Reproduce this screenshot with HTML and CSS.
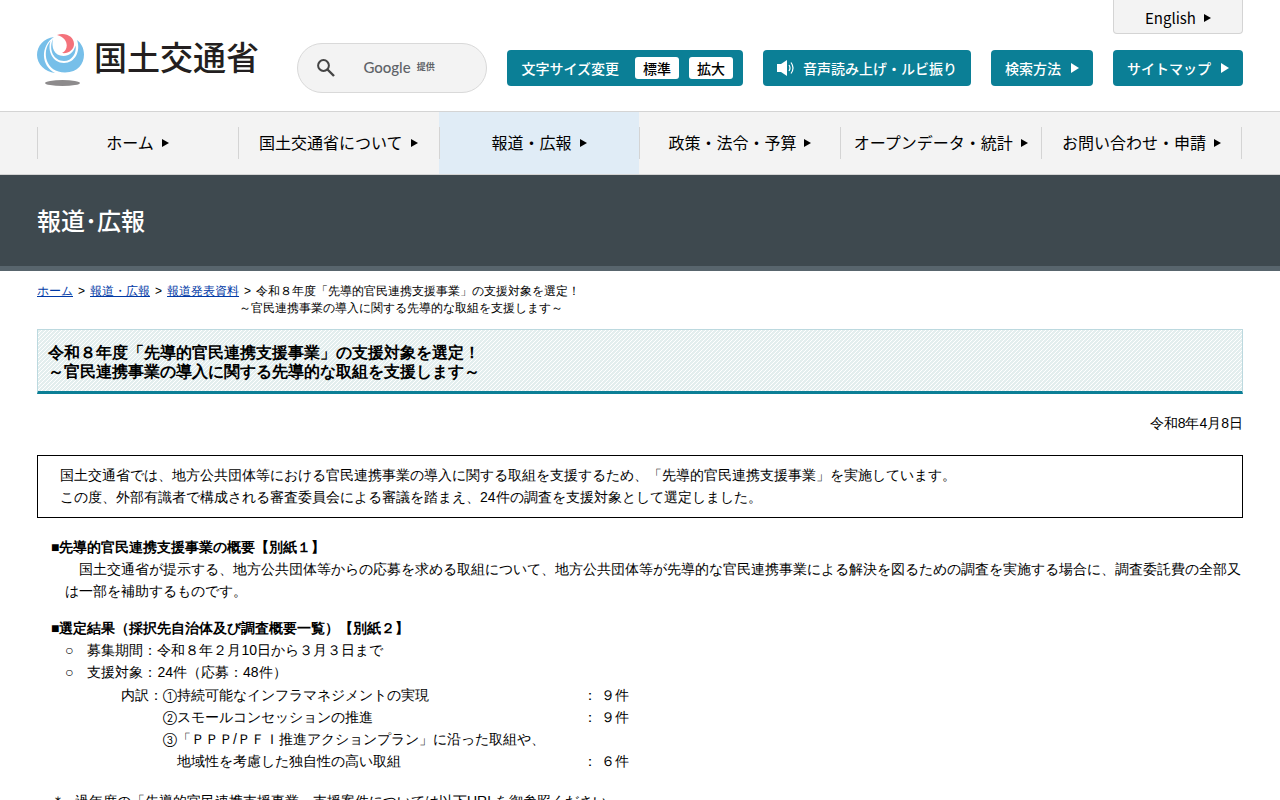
FILE: index.html
```html
<!DOCTYPE html>
<html lang="ja">
<head>
    <meta charset="UTF-8">
    <meta name="viewport" content="width=device-width, initial-scale=1.0">
    <title>報道発表資料：令和８年度「先導的官民連携支援事業」の支援対象を選定！ - 国土交通省</title>
    <link rel="stylesheet" href="styles.css">
</head>
<body>
    <header class="header">
        <a href="#" class="logo">
            <svg class="logo-mark" viewBox="0 0 48 53" width="48" height="53" aria-hidden="true">
                <ellipse cx="25.500" cy="49" rx="17.500" ry="3" fill="#8d8b8c"/>
                <path d="M17 3C7 4 0 12 0 21c0 9 8 17 18 18C4 32 3 12 17 3z" fill="#77bfe9"/>
                <path d="M13.500 7C4 18 9 38.500 28 38.500c13 0 19-8.500 19-18C47 14 44 9 40 6c4 11-2 23-13 23C16 29 10 17 13.500 7z" fill="#77bfe9"/>
                <path d="M16 5c-5 11 1 22 11 22 8 0 13-8 11.500-15.500C37 18 32 22 26.500 22 17 22 14 13 16 5z" fill="#77bfe9"/>
                <path d="M20 1c9-3 17 2 17 9 0 6-6 10-12 9 7-3 7-15-5-18z" fill="#f4727b"/>
            </svg>
            <span class="logo-text">国土交通省</span>
        </a>
        <div class="header-right">
            <a href="#" class="english">English<span class="arrow"></span></a>
            <div class="tools">
                <form class="search">
                    <button type="submit" class="search-button" aria-label="検索">
                        <svg viewBox="0 0 18 18" width="18" height="18" aria-hidden="true">
                            <circle cx="6.500" cy="6.500" r="5.400" fill="none" stroke="#444" stroke-width="2"/>
                            <path d="M10.500 10.500l6.500 6.500" stroke="#444" stroke-width="2.400"/>
                        </svg>
                    </button>
                    <label class="search-label" for="q"><span class="google">Google</span>提供</label>
                    <input type="text" id="q" class="search-input">
                </form>
                <div class="tool font-size">
                    <span>文字サイズ変更</span>
                    <button type="button">標準</button>
                    <button type="button">拡大</button>
                </div>
                <a href="#" class="tool">
                    <svg class="speaker" viewBox="0 0 18 16" width="18" height="16" aria-hidden="true">
                        <path d="M0 4h4l6-4v16l-6-4H0z" fill="#fff"/>
                        <path d="M12 5q2 3 0 6M14 2.500q4 5.500 0 11" fill="none" stroke="#fff" stroke-width="1.200"/>
                    </svg>
                    音声読み上げ・ルビ振り
                </a>
                <a href="#" class="tool">検索方法<span class="arrow"></span></a>
                <a href="#" class="tool">サイトマップ<span class="arrow"></span></a>
            </div>
        </div>
    </header>

    <nav class="nav">
        <ul>
            <li><a href="#">ホーム<span class="arrow"></span></a></li>
            <li><a href="#">国土交通省について<span class="arrow"></span></a></li>
            <li class="active"><a href="#">報道・広報<span class="arrow"></span></a></li>
            <li><a href="#">政策・法令・予算<span class="arrow"></span></a></li>
            <li><a href="#">オープンデータ・統計<span class="arrow"></span></a></li>
            <li><a href="#">お問い合わせ・申請<span class="arrow"></span></a></li>
        </ul>
    </nav>

    <div class="category">報道･広報</div>

    <main class="main">
        <ol class="breadcrumb">
            <li><a href="#">ホーム</a></li>
            <li><a href="#">報道・広報</a></li>
            <li><a href="#">報道発表資料</a></li>
            <li>令和８年度「先導的官民連携支援事業」の支援対象を選定！<br>～官民連携事業の導入に関する先導的な取組を支援します～</li>
        </ol>

        <h1>令和８年度「先導的官民連携支援事業」の支援対象を選定！<br>～官民連携事業の導入に関する先導的な取組を支援します～</h1>
        <p class="date">令和8年4月8日</p>

        <div class="summary">
            国土交通省では、地方公共団体等における官民連携事業の導入に関する取組を支援するため、「先導的官民連携支援事業」を実施しています。<br>
            この度、外部有識者で構成される審査委員会による審議を踏まえ、24件の調査を支援対象として選定しました。
        </div>

        <section class="section">
            <h2>■先導的官民連携支援事業の概要【別紙１】</h2>
            <p class="indent">国土交通省が提示する、地方公共団体等からの応募を求める取組について、地方公共団体等が先導的な官民連携事業による解決を図るための調査を実施する場合に、調査委託費の全部又は一部を補助するものです。</p>
        </section>

        <section class="section">
            <h2>■選定結果（採択先自治体及び調査概要一覧）【別紙２】</h2>
            <ul class="result">
                <li>○　募集期間：令和８年２月10日から３月３日まで</li>
                <li>○　支援対象：24件（応募：48件）</li>
            </ul>
            <table class="breakdown">
                <tr>
                    <th>内訳：</th>
                    <td><span class="num">①</span>持続可能なインフラマネジメントの実現</td>
                    <td class="count">： ９件</td>
                </tr>
                <tr>
                    <th></th>
                    <td><span class="num">②</span>スモールコンセッションの推進</td>
                    <td class="count">： ９件</td>
                </tr>
                <tr>
                    <th></th>
                    <td><span class="num">③</span>「ＰＰＰ/ＰＦＩ推進アクションプラン」に沿った取組や、</td>
                    <td></td>
                </tr>
                <tr>
                    <th></th>
                    <td>　地域性を考慮した独自性の高い取組</td>
                    <td class="count">： ６件</td>
                </tr>
            </table>
        </section>

        <p class="note"><span class="mark">＊</span>過年度の「先導的官民連携支援事業」支援案件については以下URLを御参照ください。</p>
    </main>
</body>
</html>
```
FILE: styles.css
```css
* {
    box-sizing: border-box;
}
body {
    margin: 0;
    background: #fff;
    color: #000;
    font-family: "Liberation Sans", sans-serif;
    font-size: 14px;
    line-height: 22px;
}
ul, ol {
    list-style: none;
    margin: 0;
    padding: 0;
}
p {
    margin: 0;
}
.header, .nav, .category {
    font-family: "Noto Sans CJK JP", sans-serif;
    padding: 0 37px;
}
.header a, .nav a {
    color: #000;
    text-decoration: none;
}
.arrow {
    display: inline-block;
    border-left: 7px solid currentColor;
    border-top: 4px solid transparent;
    border-bottom: 4px solid transparent;
    margin-left: 8px;
}

/* header */
.header {
    display: flex;
    justify-content: space-between;
    align-items: flex-start;
    padding-bottom: 18px;
}
.logo {
    display: flex;
    gap: 9px;
    padding-top: 34px;
}
.logo-text {
    color: #231f20;
    font-size: 33px;
    font-weight: 500;
    line-height: 44px;
    white-space: nowrap;
}
.header-right {
    display: flex;
    flex-direction: column;
    align-items: flex-end;
    gap: 9px;
}
.header .english {
    display: flex;
    align-items: center;
    justify-content: center;
    width: 130px;
    height: 34px;
    padding-top: 3px;
    background: #f3f3f3;
    border: 1px solid #d4d4d4;
    border-top: 0;
    border-radius: 0 0 4px 4px;
    font-size: 15px;
}
.tools {
    display: flex;
    align-items: center;
    gap: 20px;
}
.search {
    display: flex;
    align-items: center;
    width: 190px;
    height: 50px;
    padding: 0 19px;
    background: #f3f3f3;
    border: 1px solid #d9d9d9;
    border-radius: 25px;
}
.search-button {
    display: flex;
    padding: 0;
    background: none;
    border: 0;
    cursor: pointer;
}
.search-label {
    display: flex;
    align-items: center;
    gap: 6px;
    margin-left: 28px;
    padding-bottom: 2px;
    color: #5f6368;
    font-size: 9px;
    font-weight: 700;
    white-space: nowrap;
}
.google {
    font-family: Lato, sans-serif;
    font-size: 15px;
    font-weight: 500;
}
.search-input {
    flex: 1;
    min-width: 0;
    padding: 0;
    background: none;
    border: 0;
    outline: none;
}
.header .tool {
    display: flex;
    align-items: center;
    height: 36px;
    padding: 0 14px;
    background: #0b7f96;
    border-radius: 4px;
    color: #fff;
    font-weight: 500;
    white-space: nowrap;
}
.tool .arrow {
    border-left-width: 8px;
    border-top-width: 5px;
    border-bottom-width: 5px;
    margin-left: 10px;
}
.header .font-size {
    gap: 10px;
    padding-right: 10px;
}
.font-size span {
    margin-right: 6px;
}
.font-size button {
    width: 44px;
    height: 22px;
    padding: 0;
    background: #fff;
    border: 0;
    border-radius: 3px;
    color: #000;
    font-family: inherit;
    font-size: 14px;
    font-weight: 500;
    line-height: 22px;
    cursor: pointer;
}
.speaker {
    margin-right: 8px;
}

/* global nav */
.nav {
    background: #f3f3f3;
    border-top: 1px solid #d4d4d4;
    border-bottom: 1px solid #d4d4d4;
}
.nav ul {
    display: grid;
    grid-template-columns: repeat(6, 1fr);
    padding-right: 1px;
    background: linear-gradient(#d4d4d4, #d4d4d4) right center / 1px 32px no-repeat content-box;
}
.nav li {
    background: linear-gradient(#d4d4d4, #d4d4d4) left center / 1px 32px no-repeat;
}
.nav .active {
    background-color: #e0ecf6;
}
.nav a {
    display: flex;
    align-items: center;
    justify-content: center;
    height: 62px;
    padding-bottom: 2px;
    font-size: 16px;
    white-space: nowrap;
}
.nav .arrow {
    margin-top: 2px;
}
.category {
    padding-top: 25px;
    padding-bottom: 26px;
    background: #3e494f;
    border-bottom: 5px solid #58656d;
    color: #fff;
    font-size: 24px;
    font-weight: 500;
    line-height: 40px;
}

/* contents */
.main {
    padding: 12px 37px 40px;
}
.breadcrumb {
    display: flex;
    font-size: 12px;
    line-height: 17px;
}
.breadcrumb li + li::before {
    content: ">";
    padding: 0 5px;
}
.breadcrumb a {
    color: #0039a6;
}
h1 {
    margin: 12px 0 0;
    padding: 13px 10px 10px;
    background: linear-gradient(135deg, #e3eeee 45%, #fff 45% 55%, #e3eeee 55%) 0 0 / 4px 4px;
    border: 1px solid #bcd9df;
    border-bottom: 3px solid #0b7f96;
    font-size: 16px;
    line-height: 19px;
}
.date {
    margin: 18px 0 21px;
    text-align: right;
}
.summary {
    padding: 8px 22px 9px;
    border: 1px solid #000;
}
.section {
    margin-top: 15px;
    padding-left: 14px;
}
.summary + .section {
    margin-top: 18px;
}
h2 {
    margin: 0;
    font-size: 14px;
}
.indent {
    padding-left: 14px;
    text-indent: 14px;
}
.result {
    padding-left: 14px;
}
.breakdown {
    margin: 1px 0 0 70px;
    border-collapse: collapse;
}
.breakdown th {
    width: 42px;
    padding: 0;
    font-weight: normal;
    text-align: left;
}
.breakdown td {
    padding: 0;
}
.breakdown .count {
    padding-left: 38px;
}
.num {
    display: inline-block;
    width: 14px;
    font-family: Inter, "Noto Sans CJK JP", sans-serif;
    font-size: 10px;
    line-height: 16px;
}
.note {
    margin-top: 18px;
    padding-left: 14px;
}
.mark {
    margin-right: 10px;
}
```
